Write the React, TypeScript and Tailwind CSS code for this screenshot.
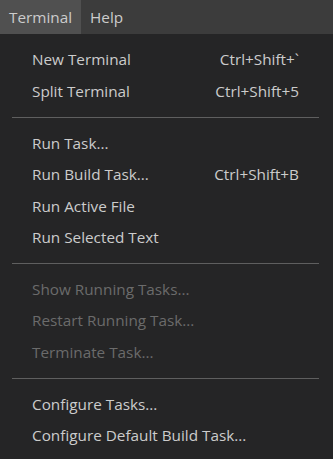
import type { ReactNode } from 'react';

type Item = { label: string; shortcut?: string; disabled?: boolean } | 'sep';

const items: Item[] = [
  { label: 'New Terminal', shortcut: 'Ctrl+Shift+`' },
  { label: 'Split Terminal', shortcut: 'Ctrl+Shift+5' },
  'sep',
  { label: 'Run Task...' },
  { label: 'Run Build Task...', shortcut: 'Ctrl+Shift+B' },
  { label: 'Run Active File' },
  { label: 'Run Selected Text' },
  'sep',
  { label: 'Show Running Tasks...', disabled: true },
  { label: 'Restart Running Task...', disabled: true },
  { label: 'Terminate Task...', disabled: true },
  'sep',
  { label: 'Configure Tasks...' },
  { label: 'Configure Default Build Task...' },
];

function MenuBarItem({ active, children }: { active?: boolean; children: ReactNode }) {
  return (
    <div className={`flex h-full items-center px-[9px] ${active ? 'bg-[#505050]' : ''}`}>
      {children}
    </div>
  );
}

export default function App() {
  return (
    <div
      className="h-[459px] w-[333px] overflow-hidden bg-[#252526] text-[15.3px] text-[#cccccc]"
      style={{ fontFamily: '"Segoe UI", "Open Sans", "Noto Sans", sans-serif' }}
    >
      {/* Menu bar */}
      <div className="flex h-[34px] items-center bg-[#3c3c3c]">
        <MenuBarItem active>Terminal</MenuBarItem>
        <MenuBarItem>Help</MenuBarItem>
      </div>

      {/* Dropdown */}
      <div className="pt-[10px]">
        {items.map((item, i) =>
          item === 'sep' ? (
            <div key={i} className="flex h-[20px] items-center pl-[12px] pr-[14px]">
              <div className="h-px w-full bg-[#5f5f5f]" />
            </div>
          ) : (
            <div
              key={i}
              className={`flex h-[31.6px] items-center justify-between pl-[32px] pr-[34px] ${
                item.disabled ? 'text-[#6b6b6b]' : ''
              }`}
            >
              <span>{item.label}</span>
              {item.shortcut && <span>{item.shortcut}</span>}
            </div>
          )
        )}
      </div>
    </div>
  );
}
